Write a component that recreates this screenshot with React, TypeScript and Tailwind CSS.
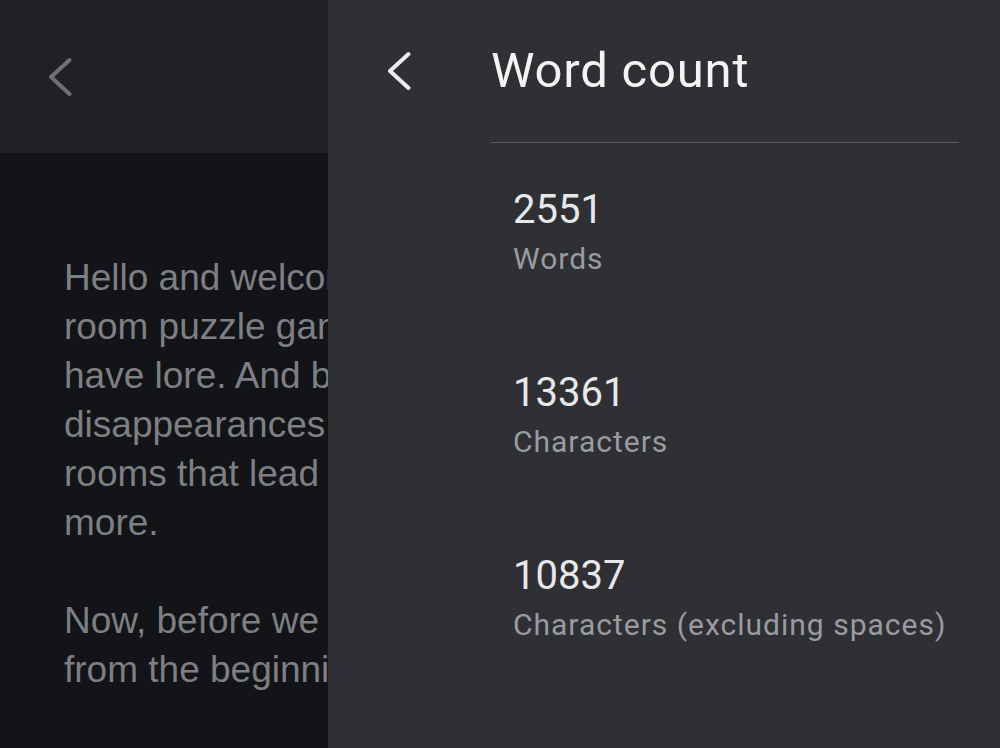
const Chevron = ({ className }: { className: string }) => (
  <svg viewBox="0 0 24 40" className={className} fill="none" stroke="currentColor" strokeWidth={4} strokeLinecap="round" strokeLinejoin="round">
    <path d="M21.5 3 L3 20 L21.5 37" />
  </svg>
);

const lines = [
  "Hello and welcome to The Room, an escape",
  "room puzzle game that happens to",
  "have lore. And boy, is there a lot of it:",
  "disappearances, cults, secret societies,",
  "rooms that lead to other worlds and",
  "more.",
];

const lines2 = [
  "Now, before we dive in, let's start",
  "from the beginning.",
];

const stats = [
  { value: "2551", label: "Words" },
  { value: "13361", label: "Characters" },
  { value: "10837", label: "Characters (excluding spaces)" },
];

export default function App() {
  return (
    <div className="flex h-[748px] w-[1000px] overflow-hidden">
      {/* document behind the drawer */}
      <div className="flex w-[328px] shrink-0 flex-col overflow-hidden">
        <header className="flex h-[153px] shrink-0 items-center bg-[#202124] pl-12">
          <Chevron className="h-10 w-6 text-[#6f7073]" />
        </header>
        <div className="flex-1 bg-[#131417] pl-16 pt-[100px] font-['Liberation_Sans',Arial,sans-serif] text-[37px] leading-[49px] text-[#7e7f82]">
          {lines.map((l) => (
            <div key={l} className="whitespace-nowrap">{l}</div>
          ))}
          <div className="h-[49px]" />
          {lines2.map((l) => (
            <div key={l} className="whitespace-nowrap">{l}</div>
          ))}
        </div>
      </div>

      {/* word count drawer */}
      <div className="flex flex-1 flex-col bg-[#2f3034] font-['Roboto',sans-serif]">
        <div className="flex h-[142px] items-center pl-[59px]">
          <Chevron className="h-10 w-6 text-[#ececee]" />
          <h1 className="ml-[80px] text-[49px] leading-[56px] tracking-[0.8px] text-[#f4f4f5]">Word count</h1>
        </div>
        <div className="ml-[163px] mr-[41px] h-px bg-[#5a5b5f]" />
        <div className="mt-[43px] flex flex-col gap-[92px] pl-[185px]">
          {stats.map((s) => (
            <div key={s.label} className="flex flex-col">
              <span className="text-[40px] leading-[48px] text-[#e8e8ea]">{s.value}</span>
              <span className="mt-[7px] text-[30px] leading-[36px] tracking-[1px] text-[#9a9b9f]">{s.label}</span>
            </div>
          ))}
        </div>
      </div>
    </div>
  );
}
